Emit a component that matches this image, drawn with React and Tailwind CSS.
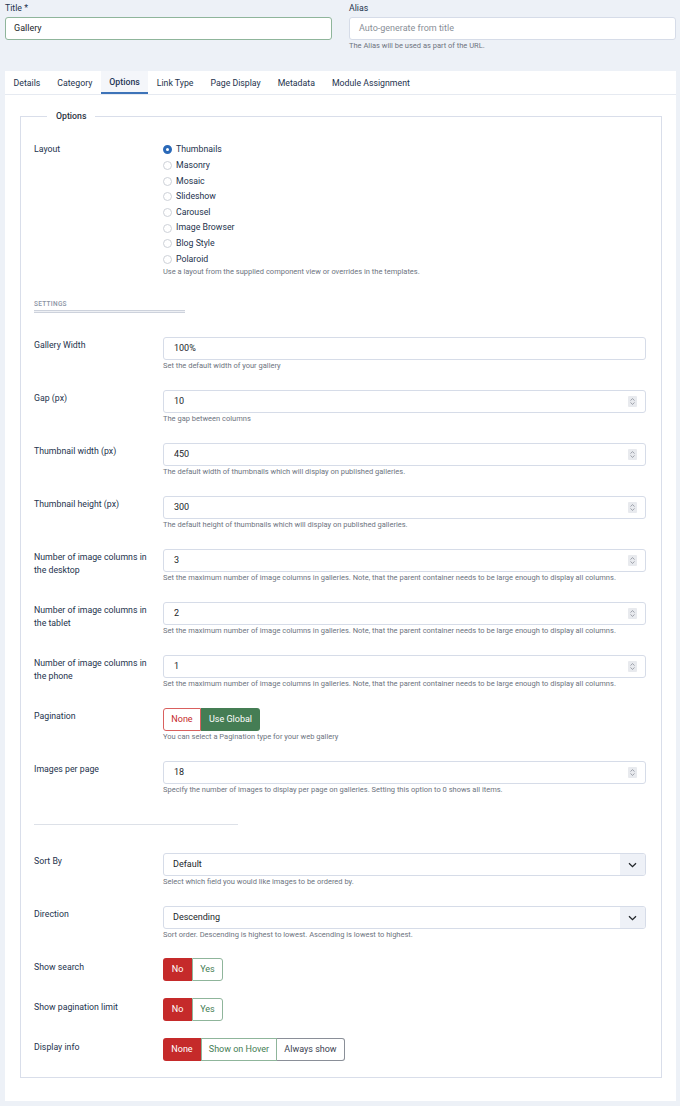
import React from "react";

const font = { fontFamily: "Roboto, 'Noto Sans', sans-serif" };

function Spinner() {
  return (
    <div className="w-[9px] h-[11px] bg-[#e8eaee] rounded-[1px] flex flex-col items-center justify-center gap-[1px]">
      <svg width="5" height="3" viewBox="0 0 5 3"><path d="M0.5 2.5 L2.5 0.6 L4.5 2.5" fill="none" stroke="#8b909a" strokeWidth="0.8" /></svg>
      <svg width="5" height="3" viewBox="0 0 5 3"><path d="M0.5 0.5 L2.5 2.4 L4.5 0.5" fill="none" stroke="#8b909a" strokeWidth="0.8" /></svg>
    </div>
  );
}

function Hint({ children }) {
  return <div className="mt-[1px] text-[7.5px] leading-[10px] text-[#6d7480] whitespace-nowrap">{children}</div>;
}

function Label({ children, pt = "pt-[1.5px]" }) {
  return <div className={`w-[129px] shrink-0 ${pt} text-[8.75px] leading-[13px] text-[#24334d]`}>{children}</div>;
}

function NumberRow({ label, value, hint }) {
  return (
    <div className="flex mb-[19px]">
      <Label>{label}</Label>
      <div className="flex-1">
        <div className="h-[23px] border border-[#d6dce8] rounded-[3px] bg-white flex items-center pl-[10px] pr-[8px]">
          <span className="flex-1 text-[9px] text-[#22262a]">{value}</span>
          <Spinner />
        </div>
        <Hint>{hint}</Hint>
      </div>
    </div>
  );
}

function SelectRow({ label, value, hint }) {
  return (
    <div className="flex mb-[19px]">
      <Label>{label}</Label>
      <div className="flex-1">
        <div className="h-[23px] border border-[#d6dce8] rounded-[3px] bg-white flex items-stretch overflow-hidden">
          <span className="flex-1 flex items-center pl-[9px] text-[9px] text-[#22262a]">{value}</span>
          <div className="w-[25px] bg-[#eef1f7] flex items-center justify-center">
            <svg width="9" height="6" viewBox="0 0 9 6"><path d="M1 1.2 L4.5 4.6 L8 1.2" fill="none" stroke="#22262a" strokeWidth="1.3" /></svg>
          </div>
        </div>
        <Hint>{hint}</Hint>
      </div>
    </div>
  );
}

const Radio = ({ checked, label }) => (
  <div className="flex items-center h-[15.65px]">
    {checked ? (
      <span className="w-[9px] h-[9px] rounded-full border-[3px] border-[#2a69b8] bg-white mr-[4px]" />
    ) : (
      <span className="w-[9px] h-[9px] rounded-full border border-[#cdd1d8] bg-white mr-[4px]" />
    )}
    <span className="text-[8.75px] text-[#24334d]">{label}</span>
  </div>
);

export default function App() {
  const tabs = ["Details", "Category", "Options", "Link Type", "Page Display", "Metadata", "Module Assignment"];
  const layouts = ["Thumbnails", "Masonry", "Mosaic", "Slideshow", "Carousel", "Image Browser", "Blog Style", "Polaroid"];
  const colsHint = "Set the maximum number of image columns in galleries. Note, that the parent container needs to be large enough to display all columns.";
  return (
    <div className="w-[680px] h-[1106px] bg-[#edf1f7] overflow-hidden" style={font}>
      <div className="grid grid-cols-2 gap-[17px] pl-[5px] pr-[4px] pt-[1.5px]">
        <div>
          <div className="text-[8.75px] leading-[13px] text-[#24334d] mb-[2.5px]">Title *</div>
          <div className="h-[23px] border border-[#8fb59b] rounded-[3px] bg-white flex items-center pl-[8px] text-[9px] text-[#22262a]">Gallery</div>
        </div>
        <div>
          <div className="text-[8.75px] leading-[13px] text-[#24334d] mb-[2.5px]">Alias</div>
          <div className="h-[23px] border border-[#d6dce8] rounded-[3px] bg-white flex items-center pl-[9px] text-[9px] text-[#8a8f98]">Auto-generate from title</div>
          <Hint>The Alias will be used as part of the URL.</Hint>
        </div>
      </div>

      <div className="mt-[20px] ml-[5px] mr-[4px] bg-white h-[1030px]">
        <div className="flex h-[24px] border-b border-[#e6eaf1] pl-[-0.5px]">
          {tabs.map((t) => (
            <div
              key={t}
              className={`px-[8.5px] pt-[2px] flex items-center text-[8.75px] ${t === "Options" ? "bg-[#f4f6fa] border-b-2 border-[#3d73b8] font-medium text-[#1d3557]" : "text-[#24334d]"}`}
            >
              {t}
            </div>
          ))}
        </div>

        <div className="pt-[15px] pl-[15px] pr-[14px]">
          <fieldset className="border border-[#d9deea] pl-[13px] pr-[15px] pb-[16px]">
            <legend className="ml-[13px] px-[9px] text-[8.75px] leading-[13px] font-medium text-[#2b3441]">Options</legend>

            <div className="flex pt-[19px]">
              <Label pt="pt-[1.3px]">Layout</Label>
              <div className="flex-1">
                {layouts.map((l, i) => (
                  <Radio key={l} checked={i === 0} label={l} />
                ))}
                <div className="mt-[0px] text-[7.5px] leading-[10px] text-[#6d7480]">Use a layout from the supplied component view or overrides in the templates.</div>
              </div>
            </div>

            <div className="mt-[23px] mb-[24px]">
              <div className="text-[6.5px] leading-[9px] tracking-[0.3px] text-[#8a93a4] font-medium">SETTINGS</div>
              <div className="w-[151px] h-[3px] border-t border-b border-[#cdd2dc] bg-[#eef0f4] mt-[1px]" />
            </div>

            <div className="flex mb-[19px]">
              <Label>Gallery Width</Label>
              <div className="flex-1">
                <div className="h-[23px] border border-[#d6dce8] rounded-[3px] bg-white flex items-center pl-[10px] text-[9px] text-[#22262a]">100%</div>
                <Hint>Set the default width of your gallery</Hint>
              </div>
            </div>
            <NumberRow label="Gap (px)" value="10" hint="The gap between columns" />
            <NumberRow label="Thumbnail width (px)" value="450" hint="The default width of thumbnails which will display on published galleries." />
            <NumberRow label="Thumbnail height (px)" value="300" hint="The default height of thumbnails which will display on published galleries." />
            <NumberRow label={<>Number of image columns in<br />the desktop</>} value="3" hint={colsHint} />
            <NumberRow label={<>Number of image columns in<br />the tablet</>} value="2" hint={colsHint} />
            <NumberRow label={<>Number of image columns in<br />the phone</>} value="1" hint={colsHint} />

            <div className="flex mb-[19px]">
              <Label pt="pt-[2px]">Pagination</Label>
              <div className="flex-1">
                <div className="flex h-[23px]">
                  <div className="w-[38px] flex items-center justify-center border border-[#d9605e] rounded-l-[3px] text-[9px] text-[#c52a2a]">None</div>
                  <div className="w-[59px] flex items-center justify-center bg-[#457d54] rounded-r-[3px] text-[9px] text-white">Use Global</div>
                </div>
                <Hint>You can select a Pagination type for your web gallery</Hint>
              </div>
            </div>
            <NumberRow label="Images per page" value="18" hint="Specify the number of images to display per page on galleries. Setting this option to 0 shows all items." />

            <div className="w-[204px] h-px bg-[#dde1e8] mt-[29px] mb-[28px]" />

            <SelectRow label="Sort By" value="Default" hint="Select which field you would like images to be ordered by." />
            <SelectRow label="Direction" value="Descending" hint="Sort order. Descending is highest to lowest. Ascending is lowest to highest." />

            <div className="flex mt-[-1px] mb-[17px]">
              <Label pt="pt-[3px]">Show search</Label>
              <div className="flex h-[23px]">
                <div className="w-[29px] flex items-center justify-center bg-[#c52a2a] rounded-l-[3px] text-[9px] text-white">No</div>
                <div className="w-[31px] flex items-center justify-center border border-[#8fb59b] rounded-r-[3px] text-[9px] text-[#457d54]">Yes</div>
              </div>
            </div>
            <div className="flex mb-[17px]">
              <Label pt="pt-[3px]">Show pagination limit</Label>
              <div className="flex h-[23px]">
                <div className="w-[29px] flex items-center justify-center bg-[#c52a2a] rounded-l-[3px] text-[9px] text-white">No</div>
                <div className="w-[31px] flex items-center justify-center border border-[#8fb59b] rounded-r-[3px] text-[9px] text-[#457d54]">Yes</div>
              </div>
            </div>
            <div className="flex">
              <Label pt="pt-[3px]">Display info</Label>
              <div className="flex h-[23px]">
                <div className="w-[38px] flex items-center justify-center bg-[#c52a2a] rounded-l-[3px] text-[9px] text-white">None</div>
                <div className="w-[76px] flex items-center justify-center border border-[#8fb59b] text-[9px] text-[#457d54]">Show on Hover</div>
                <div className="w-[68px] flex items-center justify-center border border-[#8a8f98] border-l-0 rounded-r-[3px] text-[9px] text-[#3b4250]">Always show</div>
              </div>
            </div>
          </fieldset>
        </div>
      </div>
    </div>
  );
}
